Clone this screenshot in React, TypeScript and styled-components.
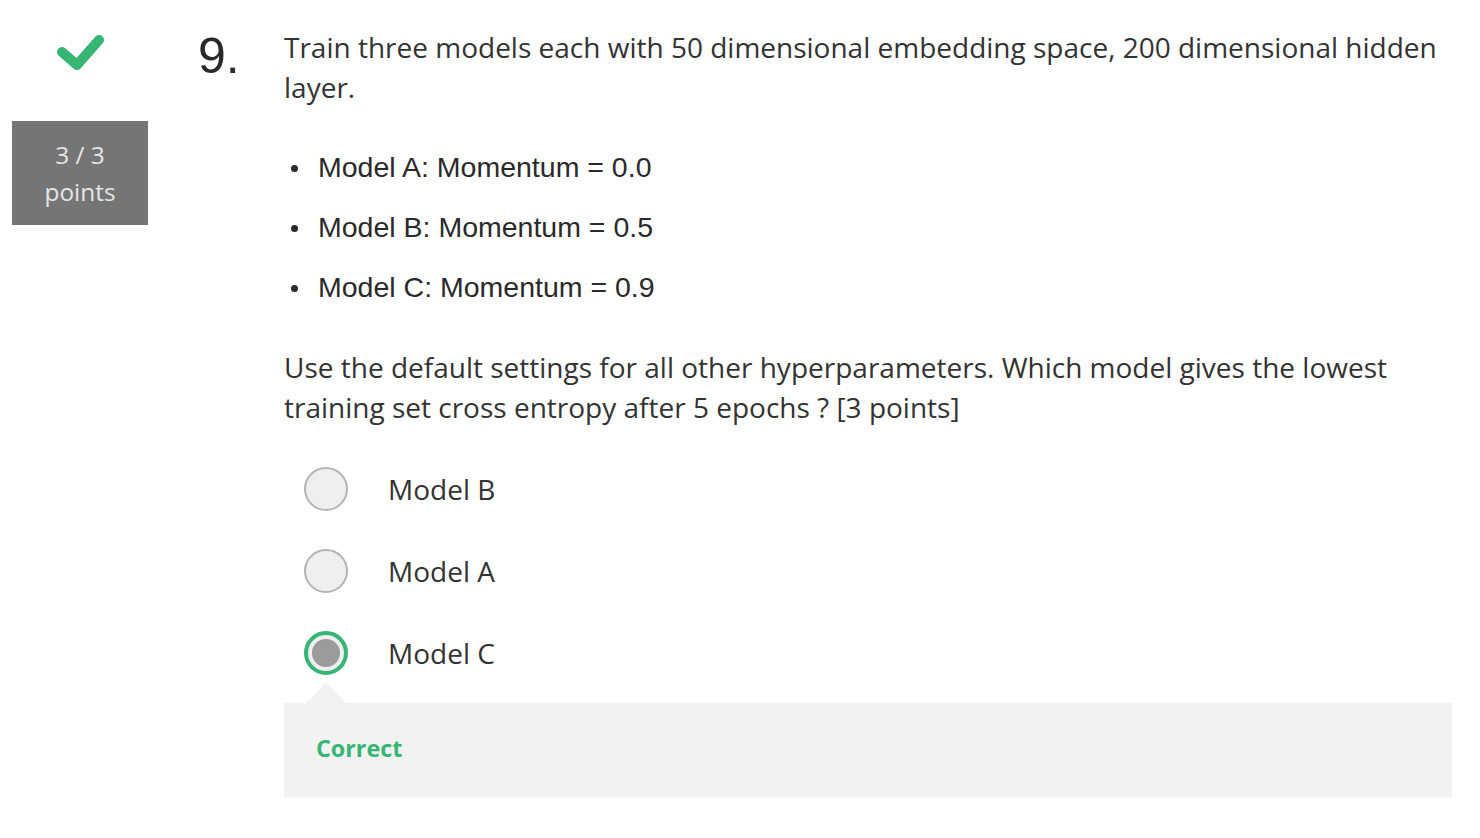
import React from 'react';
import styled, {createGlobalStyle} from 'styled-components';

const GREEN = '#36b574';
const TEXT = '#333333';

const GlobalStyle = createGlobalStyle`
    body {
        margin: 0;
        background: #ffffff;
        color: ${TEXT};
        font-family: "Open Sans", "Liberation Sans", sans-serif;
    }
`;

const StyledPage = styled.div`
    display: flex;
    width: 1480px;
    padding-top: 27px;
    box-sizing: border-box;
`;

const StyledSide = styled.div`
    display: flex;
    flex-direction: column;
    align-items: flex-start;
    width: 148px;
    padding-left: 12px;
    box-sizing: border-box;
`;

const StyledCheck = styled.svg`
    margin: 6px 0 0 44px;
    width: 48px;
    height: 38px;
`;

const StyledPoints = styled.div`
    margin-top: 50px;
    width: 136px;
    height: 104px;
    background: #757575;
    color: #e6e6e6;
    font-size: 24.4px;
    line-height: 37px;
    text-align: center;
    display: flex;
    flex-direction: column;
    justify-content: center;
`;

const StyledNumber = styled.div`
    width: 136px;
    padding-left: 50px;
    box-sizing: border-box;
    font-family: "Liberation Sans", Arial, sans-serif;
    font-size: 50px;
    line-height: 58px;
    color: #2a2a2a;
`;

const StyledContent = styled.div`
    width: 1168px;
    font-size: 28px;
    line-height: 40px;
`;

const StyledText = styled.p`
    margin: 0;
`;

const StyledList = styled.ul`
    list-style: none;
    margin: 30px 0;
    padding: 0;
`;

const StyledListItem = styled.li`
    display: flex;
    align-items: center;
    height: 60px;
    font-family: "Liberation Sans", Arial, sans-serif;
    font-size: 28.5px;
    color: #2a2a2a;

    &::before {
        content: '';
        width: 7px;
        height: 7px;
        border-radius: 50%;
        background: #2a2a2a;
        margin: 2px 20px 0 7px;
    }
`;

const StyledOptions = styled.div`
    display: flex;
    flex-direction: column;
    gap: 38px;
    margin-top: 40px;
`;

const StyledOption = styled.label`
    display: flex;
    align-items: center;
    gap: 40px;
    padding-left: 20px;
    height: 44px;
`;

const StyledRadio = styled.span<{checked: boolean}>`
    box-sizing: border-box;
    width: 44px;
    height: 44px;
    border-radius: 50%;
    background: #efefef;
    border: ${({checked}) => checked ? `4px solid ${GREEN}` : '2px solid #b3b3b3'};
    display: flex;
    align-items: center;
    justify-content: center;

    &::after {
        content: '';
        display: ${({checked}) => checked ? 'block' : 'none'};
        width: 28px;
        height: 28px;
        border-radius: 50%;
        background: #9b9b9b;
    }
`;

const StyledFeedback = styled.div`
    position: relative;
    margin-top: 28px;
    height: 94px;
    padding: 0 0 4px 32px;
    box-sizing: border-box;
    background: #f2f2f2;
    display: flex;
    align-items: center;
    font-size: 23.3px;
    font-weight: 700;
    color: ${GREEN};

    &::before {
        content: '';
        position: absolute;
        top: -20px;
        left: 22px;
        border-left: 20px solid transparent;
        border-right: 20px solid transparent;
        border-bottom: 20px solid #f2f2f2;
    }
`;

const momentums = [
    {name: 'A', value: '0.0'},
    {name: 'B', value: '0.5'},
    {name: 'C', value: '0.9'},
];

const options = [
    {label: 'Model B', checked: false},
    {label: 'Model A', checked: false},
    {label: 'Model C', checked: true},
];

const App: React.FC = () => {
    return (
        <StyledPage>
            <GlobalStyle/>
            <StyledSide>
                <StyledCheck viewBox="0 0 48 38">
                    <path
                        d="M6 19 L21 32 L43 7"
                        fill="none"
                        stroke={GREEN}
                        strokeWidth={10}
                        strokeLinecap="round"
                        strokeLinejoin="round"
                    />
                </StyledCheck>
                <StyledPoints>
                    <span>3 / 3</span>
                    <span>points</span>
                </StyledPoints>
            </StyledSide>
            <StyledNumber>9.</StyledNumber>
            <StyledContent>
                <StyledText>
                    Train three models each with 50 dimensional embedding space, 200 dimensional hidden layer.
                </StyledText>
                <StyledList>
                    {momentums.map(({name, value}) => (
                        <StyledListItem key={name}>Model {name}: Momentum = {value}</StyledListItem>
                    ))}
                </StyledList>
                <StyledText>
                    Use the default settings for all other hyperparameters. Which model gives the lowest
                    training set cross entropy after 5 epochs ? [3 points]
                </StyledText>
                <StyledOptions>
                    {options.map(({label, checked}) => (
                        <StyledOption key={label}>
                            <StyledRadio checked={checked}/>
                            {label}
                        </StyledOption>
                    ))}
                </StyledOptions>
                <StyledFeedback>Correct</StyledFeedback>
            </StyledContent>
        </StyledPage>
    );
};

export default App;
